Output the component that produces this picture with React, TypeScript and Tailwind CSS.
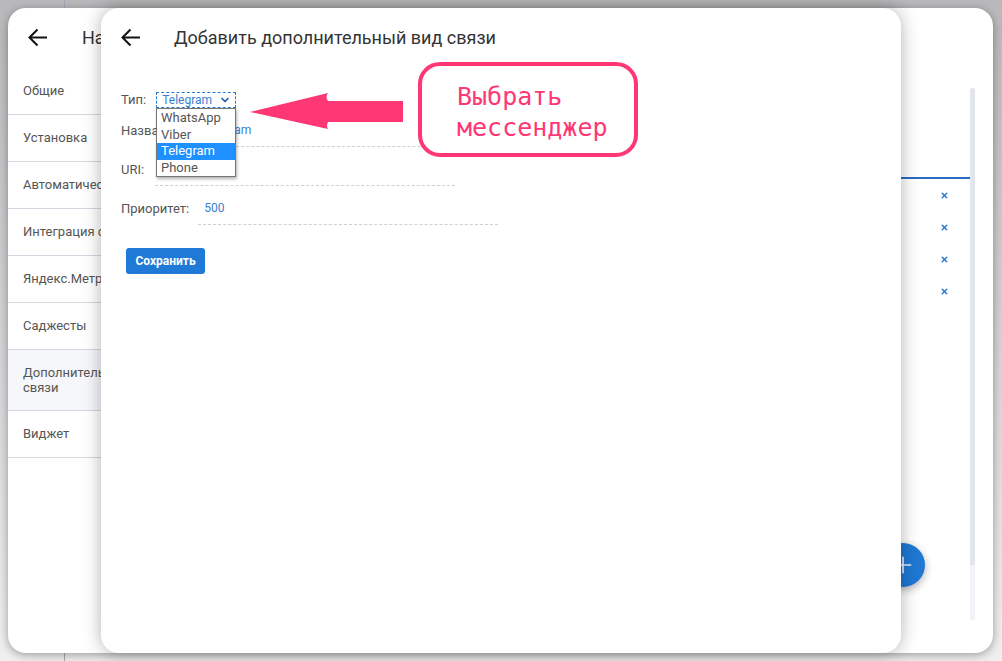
import { ChevronDown, Plus, X } from "lucide-react";

const font = { fontFamily: "Roboto, 'Noto Sans', sans-serif" };

function BackArrow() {
  return (
    <svg width="19" height="19" viewBox="0 0 19 19" fill="none" stroke="#111" strokeWidth="2">
      <path d="M19 9.5H2" />
      <path d="M9.5 1.5L1.5 9.5L9.5 17.5" />
    </svg>
  );
}

const menu = ["Общие", "Установка", "Автоматические сообщения", "Интеграция с CRM", "Яндекс.Метрика", "Саджесты"];

function BackPanel() {
  return (
    <div className="absolute left-[8px] top-[8px] flex h-[645px] w-[985px] flex-col overflow-hidden rounded-[18px] bg-white shadow-[0_2px_10px_rgba(0,0,0,0.35)]">
      <div className="flex h-[60px] shrink-0 items-center pl-[20px] pb-[2px]">
        <BackArrow />
        <span className="ml-[35px] text-[18px] text-[#333]">Настройки виджета</span>
      </div>
      <div className="flex min-h-0 flex-1">
        <div className="w-[200px] shrink-0 text-[13px] text-[#555]">
          {menu.map((m) => (
            <div key={m} className="flex h-[47px] items-center whitespace-nowrap border-b border-[#d6d6e0] pl-[15px]">
              {m}
            </div>
          ))}
          <div className="flex h-[61px] items-center border-b border-[#d6d6e0] bg-[#f6f7fb] pl-[15px] leading-[15px]">
            Дополнительные виды
            <br />
            связи
          </div>
          <div className="flex h-[47px] items-center border-b border-[#d6d6e0] pl-[15px]">Виджет</div>
        </div>
        <div className="flex flex-1 pb-[33px] pr-[18px] pt-[20px]">
          <div className="flex-1 pt-[89px]">
            <div className="h-[2px] bg-[#2a6cc0]" />
            {[0, 1, 2, 3].map((i) => (
              <div key={i} className="flex h-[32px] items-center justify-end pr-[21px]">
                <X size={9} strokeWidth={4} color="#2a78d2" />
              </div>
            ))}
          </div>
          <div className="flex w-[5px] flex-col">
            <div className="h-[477px] rounded-t-[3px] bg-[#e3e5ee]" />
            <div className="flex-1 bg-[#f2f3f8]" />
          </div>
        </div>
      </div>
      <div className="absolute left-[873px] top-[535px] flex h-[44px] w-[44px] items-center justify-center rounded-full bg-[#1f78d3] shadow-[0_3px_8px_rgba(0,0,0,0.3)]">
        <Plus size={26} strokeWidth={1.6} color="#e8eef8" />
      </div>
    </div>
  );
}

function Field({ label, value, gap, color = "#3a7fd0" }: { label: string; value: string; gap: number; color?: string }) {
  return (
    <div className="flex h-[39px] items-center">
      <span className="text-[13px] text-[#555]">{label}</span>
      <div
        className="flex h-[33px] w-[300px] items-center border-b border-dashed border-[#cfcfd8] pl-[6px] text-[12px]"
        style={{ marginLeft: gap, color }}
      >
        {value}
      </div>
    </div>
  );
}

function FrontPanel() {
  return (
    <div className="absolute left-[101px] top-[8px] flex h-[645px] w-[800px] flex-col rounded-[18px] bg-white shadow-[0_0_18px_rgba(0,0,0,0.3)]">
      <div className="flex h-[58px] shrink-0 items-center pl-[20px]">
        <BackArrow />
        <span className="ml-[34px] text-[18px] text-[#333]">Добавить дополнительный вид связи</span>
      </div>
      <div className="flex flex-col pl-[20px] pt-[22px]">
        <div className="relative flex h-[23px] items-center">
          <span className="text-[13px] text-[#555]">Тип:</span>
          <div className="ml-[10px] flex h-[16px] w-[80px] items-center justify-between border border-dashed border-[#2a7ad0] pl-[5px] pr-[4px] text-[12px] text-[#3a7fd0]">
            Telegram
            <ChevronDown size={12} strokeWidth={3.5} color="#1f5fa8" />
          </div>
          <div className="absolute left-[35px] top-[20px] z-10 w-[80px] border border-[#777] bg-white pt-[1px] text-[13px] leading-[16.6px] text-[#555] shadow-[1px_2px_3px_rgba(0,0,0,0.3)]">
            <div className="pl-[4px]">WhatsApp</div>
            <div className="pl-[4px]">Viber</div>
            <div className="bg-[#1e90ff] pl-[4px] text-white">Telegram</div>
            <div className="pl-[4px]">Phone</div>
          </div>
        </div>
        <Field label="Название:" value="Telegram" gap={12} />
        <Field label="URI:" value="" gap={11} />
        <Field label="Приоритет:" value="500" gap={9} />
        <button className="ml-[5px] mt-[20px] h-[26px] w-[79px] rounded-[3px] bg-[#1e7ad6] text-[12px] font-bold text-white">
          Сохранить
        </button>
      </div>
    </div>
  );
}

function Callout() {
  return (
    <>
      <svg className="absolute left-[250px] top-[93px]" width="154" height="37" viewBox="0 0 154 37">
        <path d="M0 19 L78 0 Q75 4 78 8 L153 8 L153 29 L78 29 Q76 33 78 36 Z" fill="#ff3775" />
      </svg>
      <div
        className="absolute left-[418px] top-[62px] flex h-[95px] w-[220px] flex-col justify-center rounded-[22px] border-[4px] border-[#ff3775] bg-white pl-[35px] pt-[4px] text-[25px] leading-[31px] text-[#ff3775]"
        style={{ fontFamily: "'DejaVu Sans Mono', monospace" }}
      >
        <span>Выбрать</span>
        <span>мессенджер</span>
      </div>
    </>
  );
}

export default function App() {
  return (
    <div
      className="relative h-[661px] w-[1002px] overflow-hidden bg-[linear-gradient(to_bottom,#b9b9bb,#d9d9db_60%,#f0f0f0)]"
      style={font}
    >
      <div className="absolute left-[64px] top-0 h-full w-px bg-[#a7a7b3]" />
      <BackPanel />
      <FrontPanel />
      <Callout />
    </div>
  );
}
